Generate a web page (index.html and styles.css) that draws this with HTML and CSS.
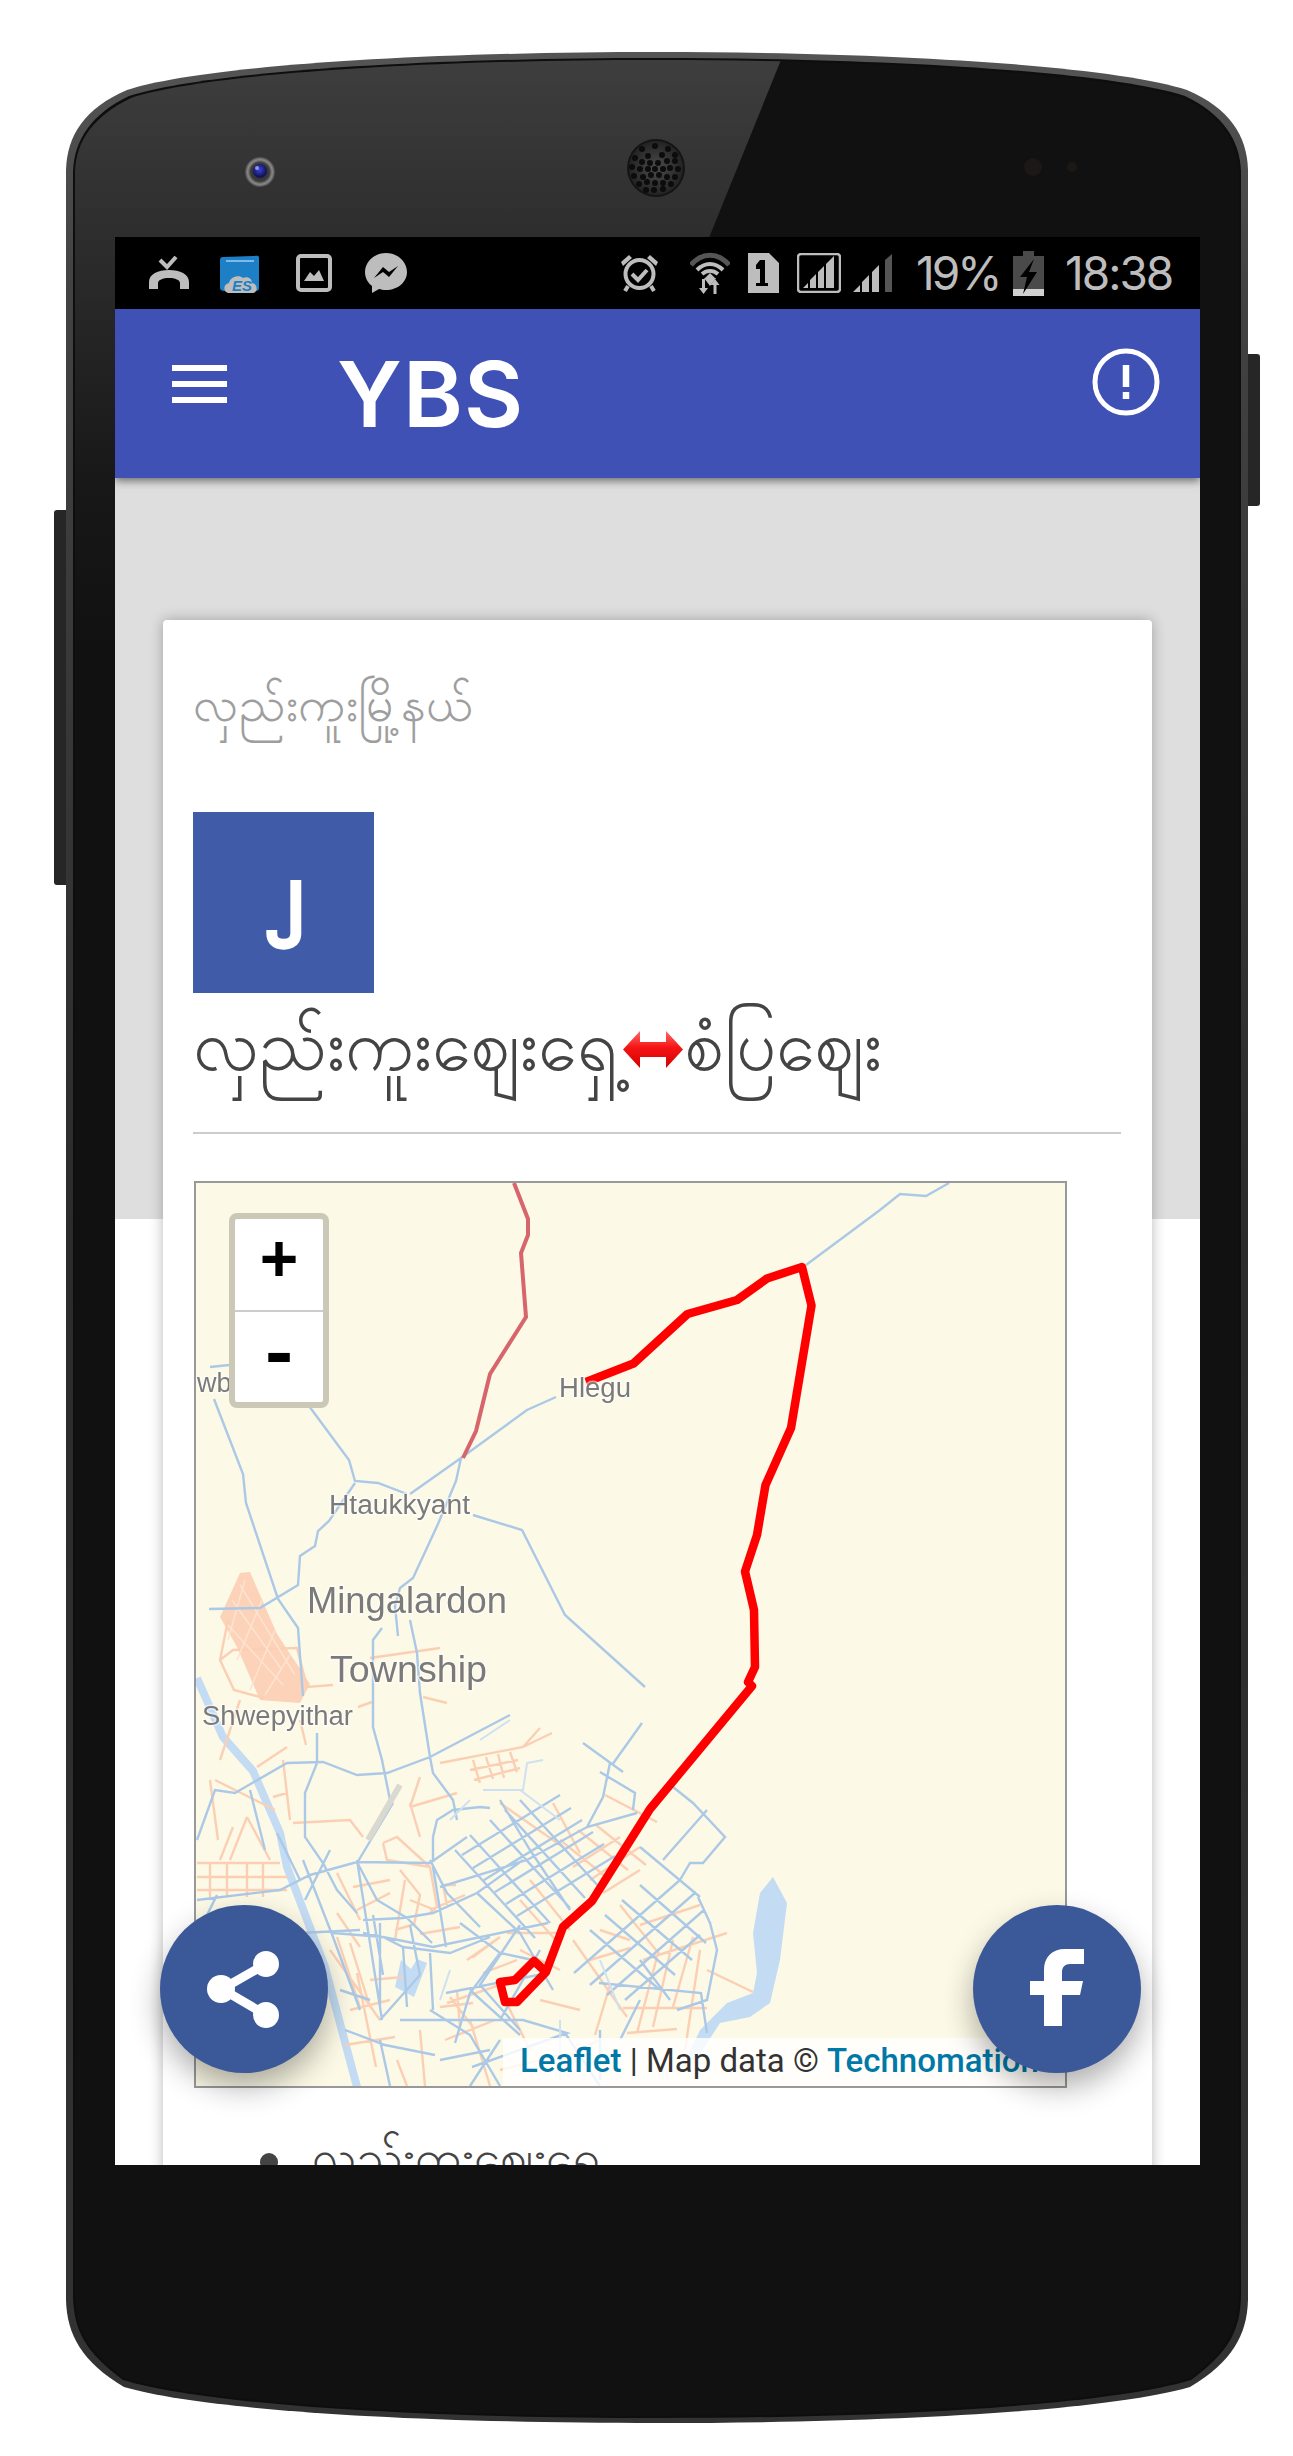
FILE: index.html
```html
<!DOCTYPE html>
<html lang="my">
<head>
<meta charset="utf-8">
<title>YBS</title>
<link rel="stylesheet" href="styles.css">
</head>
<body>
<div class="stage">
  <svg class="shell" viewBox="0 0 1293 2456" aria-hidden="true">
    <defs>
      <linearGradient id="gloss" x1="0" y1="60" x2="0" y2="620" gradientUnits="userSpaceOnUse">
        <stop offset="0" stop-color="#3e3e3e"/>
        <stop offset=".32" stop-color="#2d2d2d"/>
        <stop offset=".75" stop-color="#181818"/>
        <stop offset="1" stop-color="#121212"/>
      </linearGradient>
      <linearGradient id="rim" x1="0" y1="50" x2="0" y2="2425" gradientUnits="userSpaceOnUse">
        <stop offset="0" stop-color="#555"/>
        <stop offset=".1" stop-color="#424242"/>
        <stop offset=".5" stop-color="#2b2b2b"/>
        <stop offset="1" stop-color="#333"/>
      </linearGradient>
      <radialGradient id="lens"><stop offset="0" stop-color="#2b2b2b"/><stop offset=".62" stop-color="#3a3a3a"/><stop offset=".82" stop-color="#8a8a8a"/><stop offset="1" stop-color="#4a4a4a"/></radialGradient>
      <radialGradient id="blue" cx=".45" cy=".4"><stop offset="0" stop-color="#3a45d8"/><stop offset="1" stop-color="#14145a"/></radialGradient>
      <radialGradient id="mesh"><stop offset="0" stop-color="#4c4c4c"/><stop offset="1" stop-color="#232323"/></radialGradient>
      <clipPath id="face"><path d="M75 300 V172 C76 140 94 116 131 98 C205 74 420 60 657 60 C894 60 1109 74 1183 98 C1220 116 1238 140 1239 172 V2295 C1238 2328 1228 2350 1190 2378 C1110 2402 905 2416 657 2416 C409 2416 204 2402 124 2378 C86 2350 76 2328 75 2295 Z"/></clipPath>
    </defs>
    <rect class="btn" x="54" y="510" width="16" height="375" rx="3"/>
    <rect class="btn" x="1245" y="354" width="15" height="152" rx="3"/>
    <path fill="url(#rim)" d="M66 300 V170 C67 135 85 108 127 90 C200 66 420 52 657 52 C894 52 1114 66 1187 90 C1229 108 1247 135 1248 170 V2300 C1247 2335 1232 2362 1190 2387 C1110 2410 905 2423 657 2423 C409 2423 204 2410 124 2387 C82 2362 67 2335 66 2300 Z"/>
    <path fill="#0e0e0e" d="M73 300 V172 C74 139 92 114 129 96 C203 72 420 58 657 58 C894 58 1111 72 1185 96 C1222 114 1240 139 1241 172 V2297 C1240 2330 1229 2352 1191 2380 C1111 2404 905 2418 657 2418 C409 2418 203 2404 123 2380 C85 2352 74 2330 73 2297 Z"/>
    <g clip-path="url(#face)">
      <rect class="base" x="60" y="50" width="1200" height="2380"/>
      <path fill="url(#gloss)" d="M60 50 H785 L700 260 V640 H60 Z"/>
    </g>
    <circle cx="260" cy="172" r="15" fill="url(#lens)"/>
    <circle cx="260" cy="171" r="7" fill="url(#blue)"/>
    <circle cx="257" cy="168" r="2" class="spark"/>
    <circle cx="656" cy="168" r="29" class="mesh-edge"/>
    <circle cx="656" cy="168" r="27" fill="url(#mesh)"/>
    <g class="holes">
      <circle cx="655" cy="146" r="3"/><circle cx="642" cy="149" r="3"/><circle cx="668" cy="149" r="3"/>
      <circle cx="648" cy="156" r="3"/><circle cx="662" cy="155" r="3"/><circle cx="635" cy="158" r="3"/><circle cx="675" cy="155" r="3"/>
      <circle cx="632" cy="167" r="3"/><circle cx="642" cy="162" r="3"/><circle cx="650" cy="163" r="3"/><circle cx="658" cy="163" r="3"/><circle cx="667" cy="161" r="3"/><circle cx="675" cy="161" r="3"/>
      <circle cx="640" cy="169" r="3"/><circle cx="648" cy="169" r="3"/><circle cx="655" cy="169" r="3"/><circle cx="663" cy="169" r="3"/><circle cx="670" cy="168" r="3"/><circle cx="678" cy="169" r="3"/>
      <circle cx="634" cy="176" r="3"/><circle cx="643" cy="177" r="3"/><circle cx="651" cy="175" r="3"/><circle cx="659" cy="175" r="3"/><circle cx="667" cy="177" r="3"/><circle cx="675" cy="177" r="3"/>
      <circle cx="639" cy="184" r="3"/><circle cx="647" cy="182" r="3"/><circle cx="655" cy="183" r="3"/><circle cx="663" cy="183" r="3"/><circle cx="671" cy="184" r="3"/>
      <circle cx="646" cy="190" r="3"/><circle cx="654" cy="190" r="3"/><circle cx="663" cy="189" r="3"/>
    </g>
    <circle cx="1033" cy="167" r="9" class="sensor"/>
    <circle cx="1072" cy="167" r="5" class="sensor"/>
  </svg>

  <div class="screen">
    <div class="status">
      <svg class="ic i-call" viewBox="0 0 40 34"><path class="st-line" d="M11 4l7 7 9-10"/><path class="st-fill" d="M0 33v-7c0-8 9-12 20-12s20 4 20 12v7h-9v-6c0-3-5-5-11-5s-11 2-11 5v6z"/></svg>
      <svg class="ic i-es" viewBox="0 0 42 39"><path class="es-f" d="M3 3l30-1c3 0 5-1 6 1v30c0 3-1 4-3 4H4c-2 0-4-1-4-3V6c0-2 1-3 3-3z"/><path class="es-l" d="M6 7h28"/><path class="es-c" d="M8 39c-5-1-5-9 1-10 1-6 10-9 14-5 4-2 9 0 9 5 5 0 7 9 1 10z"/><text class="es-t" x="12" y="37">ES</text></svg>
      <svg class="ic i-img" viewBox="0 0 36 38"><rect class="st-line" x="2" y="2" width="32" height="34" rx="3"/><path class="st-fill" d="M8 27l6-9 4 4 5-6 5 11z"/></svg>
      <svg class="ic i-msg" viewBox="0 0 42 40"><path class="st-fill" d="M21 0C9 0 0 9 0 19c0 6 3 11 7 14v7l7-4c2 .5 4 1 7 1 12 0 21-8 21-18S33 0 21 0z"/><path class="msg-b" d="M9 25l9-11 6 5 9-6-9 11-6-5z"/></svg>
      <svg class="ic i-alarm" viewBox="0 0 39 40"><circle class="st-line" cx="19.5" cy="21" r="14"/><path class="st-fill" d="M1 9l8-7 3 3-9 8zM38 9l-8-7-3 3 9 8z"/><path class="st-line" d="M12 21l6 6 9-10M8 33l-3 5M31 33l3 5"/></svg>
      <svg class="ic i-wifi" viewBox="0 0 40 42"><path class="w-dim" d="M1 13C12 0 28 0 39 13"/><path class="w-on" d="M7 18c8-8 18-8 26 0M12 22c5-4 11-4 16 0"/><path class="st-fill" d="M20 21l5 5h-10zM14 26l6 8 6-8z"/><path class="st-fill" d="M12 27h3v9h3l-4.500 6-4.500-6h3zM25 27l4.500 6h-3v9h-3v-9h-3z"/></svg>
      <svg class="ic i-sim" viewBox="0 0 31 40"><path class="st-fill" fill-rule="evenodd" d="M0 0h21l10 10v30H0zM17 7h-5l-4 5v4h4v14H8v3h12v-3h-3z"/></svg>
      <svg class="ic i-sig1" viewBox="0 0 44 40"><rect class="st-line thin" x="1" y="1" width="42" height="38" rx="3"/><path class="st-fill" d="M6 35l5-5v5zM13 35v-8l6-6v14zM21 35V19l6-6v22zM29 35V11l8-8v32z"/></svg>
      <svg class="ic i-sig2" viewBox="0 0 39 38"><path class="st-fill" d="M0 38l7-7v7zM9 38V28l7-7v17zM19 38V18l7-7v27z"/><path class="w-dim-f" d="M32 38V6l7-6v38z"/></svg>
      <span class="pct">19%</span>
      <svg class="ic i-bat" viewBox="0 0 31 45"><path class="bat-b" d="M10 0h11v5h10v33H0V5h10z"/><rect class="bat-l" y="38" width="31" height="7"/><path class="msg-b" d="M21 8L7 26h7l-4 17 14-22h-8z"/></svg>
      <span class="clock">18:38</span>
    </div>

    <header class="appbar">
      <span class="burger"><i></i><i></i><i></i></span>
      <span class="logo">YBS</span>
      <svg class="info" viewBox="0 0 68 68"><circle cx="34" cy="34" r="31"/><path d="M34 17v22M34 44v7"/></svg>
    </header>

    <main class="main">
      <article class="card">
        <p class="sub">လှည်းကူးမြို့နယ်</p>
        <div class="badge"><span>၂</span></div>
        <h1 class="title">လှည်းကူးဈေးရှေ့<svg class="arrow" viewBox="0 0 60 37"><defs><linearGradient id="ar" x1="0" y1="0" x2="0" y2="1"><stop offset="0" stop-color="#ff6a6a"/><stop offset=".45" stop-color="#f41414"/><stop offset="1" stop-color="#d40000"/></linearGradient></defs><path fill="url(#ar)" d="M0 18.500L17 0v11h26V0l17 18.500L43 37V26H17v11z"/></svg>စံပြဈေး</h1>
        <hr class="rule">
        <div class="map">
          <svg class="tiles" viewBox="196 1183 869 903">
            <g class="water-f">
              <path d="M773 1877l-13 16-7 40 4 40-4 20-26 10-27 27-14 30h10l24-37 30-6 20-14 10-43 7-57z"/>
              <path d="M401 1960l-6 27 19 10 13-34-10-4-6 10z"/>
            </g>
            <path class="water" d="M197 1678l26 59 30 34 27 62 7 34 38 100 32 120"/>
            <path class="shw" d="M220 1617l20-44 10-1 27 62 33 50-10 19-40-3-23-53z"/>
            <path class="oran" d="M220 1660l13-10 64-2 10 39 26-2M228 1620l-8 40 14 30 30 8M370 1658l70-10M358 1707l14-5M423 1697l24 6M440 1763l83-16 17-19M523 1747l29-14M473 1760l7 23M486 1757l7 22M498 1754l6 24M510 1752l7 20M470 1770l48-10M474 1780l46-12M410 1803l10 34M410 1807l47-14M420 1777l-10 30M293 1823l57-3 13 17M383 1843l14-6 33 30M337 1873l23 47M233 1827l-13 33M247 1817l-17 43M247 1817l23 43M197 1863h83M197 1877h90M197 1890h90M210 1863v34M227 1863v34M247 1863v34M263 1863v34M500 1803l63 44M553 1803l27 50M605 1795l52 27M573 1867l47-30M590 1880l50-33M603 1893l37-23M560 1840l50 40M578 1830l50 40M596 1825l50 40M643 1960l84-27M657 1957l-20 76M673 1940l-20 87M693 1937l-20 70M707 1970l46 22M623 2008h84M627 2033l50-4M440 2007l33-4M457 1990l3 37M450 1997l23 30M507 1933h50M473 1957l27-20M483 1973l34-13M573 1940l54 77M357 1973l19 94M395 1930l20-6M400 1870l20 25-6 30M330 1950l50 70M350 2010l40-10M345 2045l50-8M405 1880l-10 60M600 1930l30 10M540 2000l40 10M430 1910l35-15M520 1950l40 20M445 2040l50-20M560 2060l40-20M283 1760l7 60M257 1767l30-20M273 1797l14-4M383 1843l4 17 43 7 7 40-7 6M353 1887l37-7M357 1910l33-17M337 1913l23 34M337 1937l23 70M350 1943l20 64M370 1980l33-3M447 2003l76-26M467 1960l33-23M410 1900l25 10M443 1885h13M443 1885l4 20M460 1927l-40 7M240 1700l-20 60M215 1780l60 30M300 1720l6 25M210 1780l8 60M530 1880l40 50M520 1900l40 45M500 1990l30 60M470 2020l20 66M620 1905l40 50M640 1925l60-20M610 1985l-15 50M500 2070l60-15M397 2060l10 26M420 2030l5 56M590 1960l40-12M700 1950l-15 100"/>
            <path class="shw-t" d="M232 1600l50 70M240 1585l55 90M228 1625l55 60M245 1580l-17 60M262 1600l-25 60M275 1630l-25 60M290 1655l-25 40"/>
            <path class="road" d="M949 1183l-23 13-26-2-20 16-74 55M556 1397l-29 13-66 48-51 36M461 1458l-5 23-18 43-25 54-13 10-5 18 3 30M309 1406l40 54 6 21 23 2 29 11M214 1399l29 75 3 29 32 96 20 29 5 68M210 1367l19-2M355 1483l-26 38-11 10-3 15-15 10-2 29-38 23-51 1M473 1515l49 15 43 85 80 72M382 1628l-9 12v87l9 33 8 40M410 1620l7 33 3 40 10 64 3 16 20 27 4 20M197 1840l18-50 20 3 52-30 36-1 34 13 30-2 43-16 80-42M317 1733v30l-12 30v44l18 26 14 27 20 23M357 1863l36-60M197 1900l83-10 30-15 47-13 73 1 37-26M357 1862l20 38 30 18 25 25M373 1915l10 60M440 1887l87-27 60-33 50-14M610 1763l-7 34-16 30M642 1723l-30 42M583 1743l40 29M600 1772l35 21-2 17M673 1787l20 16 32 34-22 26h-13l-10 17M707 1810l-44 50M700 1897l-60-50M698 1897l12 26 7 27-10 50-30 10M462 1855l98-60M473 1868l98-60M484 1880l98-60M495 1892l98-60M506 1904l98-60M517 1916l98-60M490 1820l80 88M505 1810l80 88M520 1800l80 88M470 1835l80 88M455 1850l80 88M500 1800l30 50 40 60M574 1973l106-93M590 1985l106-93M607 1995l97-85M625 2000l75-65M590 1930l70 60M605 1915l70 60M622 1900l70 60M640 1885l66 58M363 1933l70 14 115-24M357 1860l25 160M433 1867l13 80M446 1993l102-20M400 2020h123l44 13-95 34M599 1983l102 10 6 40M420 1975l-40 45M520 1925l-40 60 40 45M500 2040l-30 46M380 2040l10 46M300 1933l60-3M440 2060l50-10M640 2000l-20 40M600 2030v50M430 1860l17 33 33 34M433 1837l4-17 16-10 27-3 10 1M433 1837v23M333 1933l50 4 20 10 47 6 40-16M363 1920l40-2 30-5 44-20 46-33M403 1947l4 60M430 1953l3 57M380 1923v84M460 1923l40 30 33 7M277 1833l23 47M303 1860l30 77 27 73M477 1893l43 40 33 57M197 1935l20-40M410 1925l10 50M500 1953l-30 40-15 50M540 1950l-40 70M340 1990l30 10M470 1990l50 45M430 2010l40 25 30 51M345 2030l40 15 50 10M565 2033l35 53M640 1960l30 40M250 1790l15 60M330 1850l-25 50"/>
            <path class="road-lite" d="M483 1790h40l4-27 16-3M470 1800l-20 20M560 1820l-40-30M600 1960l20 50M560 2020v60M480 1740l30-20M440 2000l10-30"/>
            <path class="hwy" d="M514 1183l14 36v16l-7 18 5 64-36 57-14 57-13 27"/>
            <path class="grey-r" d="M400 1785l-32 55"/>
            <path class="route" d="M586 1382l47.500-18.500 54-49.500 49.500-14 30-21.500 35-11.500 9.500 38.500-20.500 122.500-25.500 57-8.500 50-12 36.500 9 38.500 1 57-7 15 4 4-102 123-58 92-29 26-17 45-29 30h-12l-5-20 15-2 19-19 12 11"/>
            <g class="labels">
              <text class="l-s" x="559" y="1397" textLength="72" lengthAdjust="spacingAndGlyphs">Hlegu</text>
              <text class="l-s" x="197" y="1392">wb</text>
              <text class="l-s" x="329" y="1514" textLength="141" lengthAdjust="spacingAndGlyphs">Htaukkyant</text>
              <text class="l-b" x="307" y="1613" textLength="200" lengthAdjust="spacingAndGlyphs">Mingalardon</text>
              <text class="l-b" x="330" y="1682" textLength="157" lengthAdjust="spacingAndGlyphs">Township</text>
              <text class="l-s" x="202" y="1725" textLength="151" lengthAdjust="spacingAndGlyphs">Shwepyithar</text>
            </g>
          </svg>
          <div class="zoomctl"><span class="z-in">+</span><span class="z-out">-</span></div>
          <div class="attr"><a>Leaflet</a> | Map data © <a>Technomation</a></div>
        </div>
        <ul class="stops"><li>လှည်းကူးဈေးရှေ့</li></ul>
      </article>
    </main>

    <div class="fab fab-share">
      <svg viewBox="0 0 168 168"><path class="s-line" d="M106 59L62 84l44 26"/><circle cx="106" cy="59" r="13"/><circle cx="61" cy="84" r="14"/><circle cx="106" cy="110" r="13"/></svg>
    </div>
    <div class="fab fab-fb">
      <svg viewBox="0 0 168 168"><path d="M71 121V90H57V76h14V65c0-13 8-21 21-21h19v15H97c-5 0-8 3-8 8v9h21l-3 14H89v31z"/></svg>
    </div>
  </div>
</div>
</body>
</html>
```
FILE: styles.css
```css
* { box-sizing: border-box; }
html, body { margin: 0; background: #fff; }
body { font-family: "Noto Sans", "Noto Sans CJK SC", sans-serif; }

.stage { position: relative; width: 1293px; height: 2456px; padding: 237px 93px 0 115px; overflow: hidden; }
.shell { position: absolute; inset: 0; width: 1293px; height: 2456px; }
.btn { fill: #262626; }
.base { fill: #111; }
.spark { fill: #b9c4ff; opacity: .7; }
.mesh-edge { fill: #141414; }
.holes circle { fill: #0c0c0c; }
.sensor { fill: #1c1815; }

.screen { position: relative; height: 1928px; overflow: hidden; background: #fff; }

/* status bar */
.status { display: flex; align-items: center; height: 72px; padding: 0 0 0 34px; background: #000; color: #bdbdbd; }
.ic { display: block; flex: none; }
.st-line { fill: none; stroke: #bdbdbd; stroke-width: 4; }
.st-line.thin { stroke-width: 2.500; }
.st-fill { fill: #bdbdbd; }
.w-dim { fill: none; stroke: #555; stroke-width: 5; }
.w-dim-f { fill: #555; }
.w-on { fill: none; stroke: #bdbdbd; stroke-width: 4; }
.msg-b { fill: #000; }
.es-f { fill: #1d7fc6; }
.es-l { stroke: #7fb9e6; stroke-width: 2; fill: none; }
.es-c { fill: #bdbdbd; }
.es-t { font: italic 700 15px "Liberation Sans", sans-serif; fill: #1d7fc6; }
.bat-b { fill: #4a4a4a; }
.bat-l { fill: #d0d0d0; }
.i-call { width: 40px; height: 34px; }
.i-es { width: 42px; height: 39px; margin-left: 31px; }
.i-img { width: 36px; height: 38px; margin-left: 34px; }
.i-msg { width: 42px; height: 40px; margin-left: 33px; }
.i-alarm { width: 39px; height: 40px; margin-left: 213px; }
.i-wifi { width: 40px; height: 42px; margin-left: 31px; }
.i-sim { width: 31px; height: 40px; margin-left: 18px; }
.i-sig1 { width: 44px; height: 40px; margin-left: 18px; }
.i-sig2 { width: 39px; height: 38px; margin-left: 12px; }
.pct, .clock { font-family: Inter, sans-serif; font-weight: 400; font-size: 46px; line-height: 72px; white-space: nowrap; }
.pct { width: 86px; margin-left: 24px; letter-spacing: -3px; }
.i-bat { width: 31px; height: 45px; margin-left: 11px; }
.clock { width: 109px; margin-left: 21px; letter-spacing: -2px; }

/* app bar */
.appbar { position: relative; z-index: 2; display: flex; align-items: center; height: 169px; padding: 0 40px 0 57px; background: #3f51b5; box-shadow: 0 3px 8px rgba(0, 0, 0, .5); }
.burger { display: flex; flex-direction: column; gap: 10px; width: 55px; margin-bottom: 19px; }
.burger i { display: block; height: 6px; background: #fff; }
.logo { margin-left: 110px; margin-top: 1px; color: #fff; font-family: Inter, sans-serif; font-weight: 600; font-size: 91px; line-height: 91px; letter-spacing: 1px; }
.info { width: 68px; height: 68px; margin-left: auto; margin-bottom: 23px; fill: none; stroke: #fff; stroke-width: 5; }
.info path { stroke-width: 6.500; }

/* content */
.main { position: relative; padding: 142px 48px 0; background: linear-gradient(#dedede 741px, #fff 741px); }
.card { height: 1600px; padding: 1px 31px 0 30px; background: #fff; border-radius: 4px; box-shadow: 0 0 14px rgba(0, 0, 0, .28); }
.sub { margin: 40px 0 0; color: #9e9e9e; font-size: 48px; line-height: 84px; }
.badge { display: flex; align-items: center; justify-content: center; width: 181px; height: 181px; margin-top: 67px; background: #405ca8; color: #fff; overflow: hidden; }
.badge span { display: block; font-size: 72px; line-height: 72px; font-weight: 700; -webkit-text-stroke: 5px #fff; margin-bottom: 32px; }
.title { display: flex; align-items: center; margin: -5px 0 0; height: 110px; color: #444; font-weight: 400; font-size: 70px; line-height: 110px; white-space: nowrap; }
.arrow { width: 60px; height: 37px; flex: none; margin-left: 6px; margin-right: 2px; margin-top: 12px; }
.rule { height: 2px; margin: 34px 0 0; border: 0; background: #ccc; }
.map { position: relative; width: 873px; height: 907px; margin: 47px 0 0 1px; border: 2px solid #999; background: #fcf9e6; overflow: hidden; }
.tiles { display: block; width: 869px; height: 903px; font-family: "Liberation Sans", sans-serif; }
.road { fill: none; stroke: #abc9e6; stroke-width: 2.400; filter: blur(.4px); }
.road-lite { fill: none; stroke: #cfe1f0; stroke-width: 2; }
.oran { fill: none; stroke: #fbcfb4; stroke-width: 2.400; filter: blur(.4px); }
.shw { fill: #fcd2b8; }
.shw-t { fill: none; stroke: #fde3d0; stroke-width: 1.500; }
.water { fill: none; stroke: #c3dcf3; stroke-width: 8; }
.water-f { fill: #c3dcf3; }
.hwy { fill: none; stroke: #d6656c; stroke-width: 4; }
.grey-r { fill: none; stroke: #d9d9cf; stroke-width: 6; }
.route { fill: none; stroke: #f00; stroke-width: 8.500; stroke-linejoin: round; }
.labels { fill: #7a7a7a; stroke: rgba(255, 255, 255, .55); stroke-width: 3px; paint-order: stroke; filter: blur(.6px); }
.l-s { font-size: 27px; }
.l-b { font-size: 37px; }
.zoomctl { position: absolute; left: 33px; top: 30px; display: flex; flex-direction: column; width: 100px; height: 195px; border: 6px solid #cbc8b7; border-radius: 8px; overflow: hidden; background: #fff; color: #000; font-family: "Liberation Mono", monospace; font-weight: 700; }
.z-in, .z-out { display: flex; align-items: center; justify-content: center; flex: 1; line-height: 1; }
.z-in { border-bottom: 2px solid #ccc; font-size: 66px; }
.z-out { font-size: 76px; }
.attr { position: absolute; left: 307px; right: 0; bottom: 0; height: 48px; padding-left: 17px; background: rgba(255, 255, 255, .82); color: #333; font-family: Roboto, sans-serif; font-size: 33px; line-height: 46px; white-space: nowrap; }
.attr a { color: #0078a8; font-weight: 500; }
.stops { margin: 31px 0 0; padding: 0 0 0 119px; color: #444; font-size: 47px; line-height: 72px; list-style: none; }
.stops li { position: relative; }
.stops li::before { content: ""; position: absolute; left: -52px; top: 34px; width: 18px; height: 18px; border-radius: 50%; background: #444; }

.fab { position: absolute; bottom: 92px; width: 168px; height: 168px; border-radius: 50%; background: #3b5998; box-shadow: 0 14px 30px rgba(0, 0, 0, .32); z-index: 3; }
.fab svg { display: block; width: 168px; height: 168px; fill: #fff; }
.fab-share { left: 45px; }
.fab-fb { right: 59px; }
.s-line { fill: none; stroke: #fff; stroke-width: 9; }
```
